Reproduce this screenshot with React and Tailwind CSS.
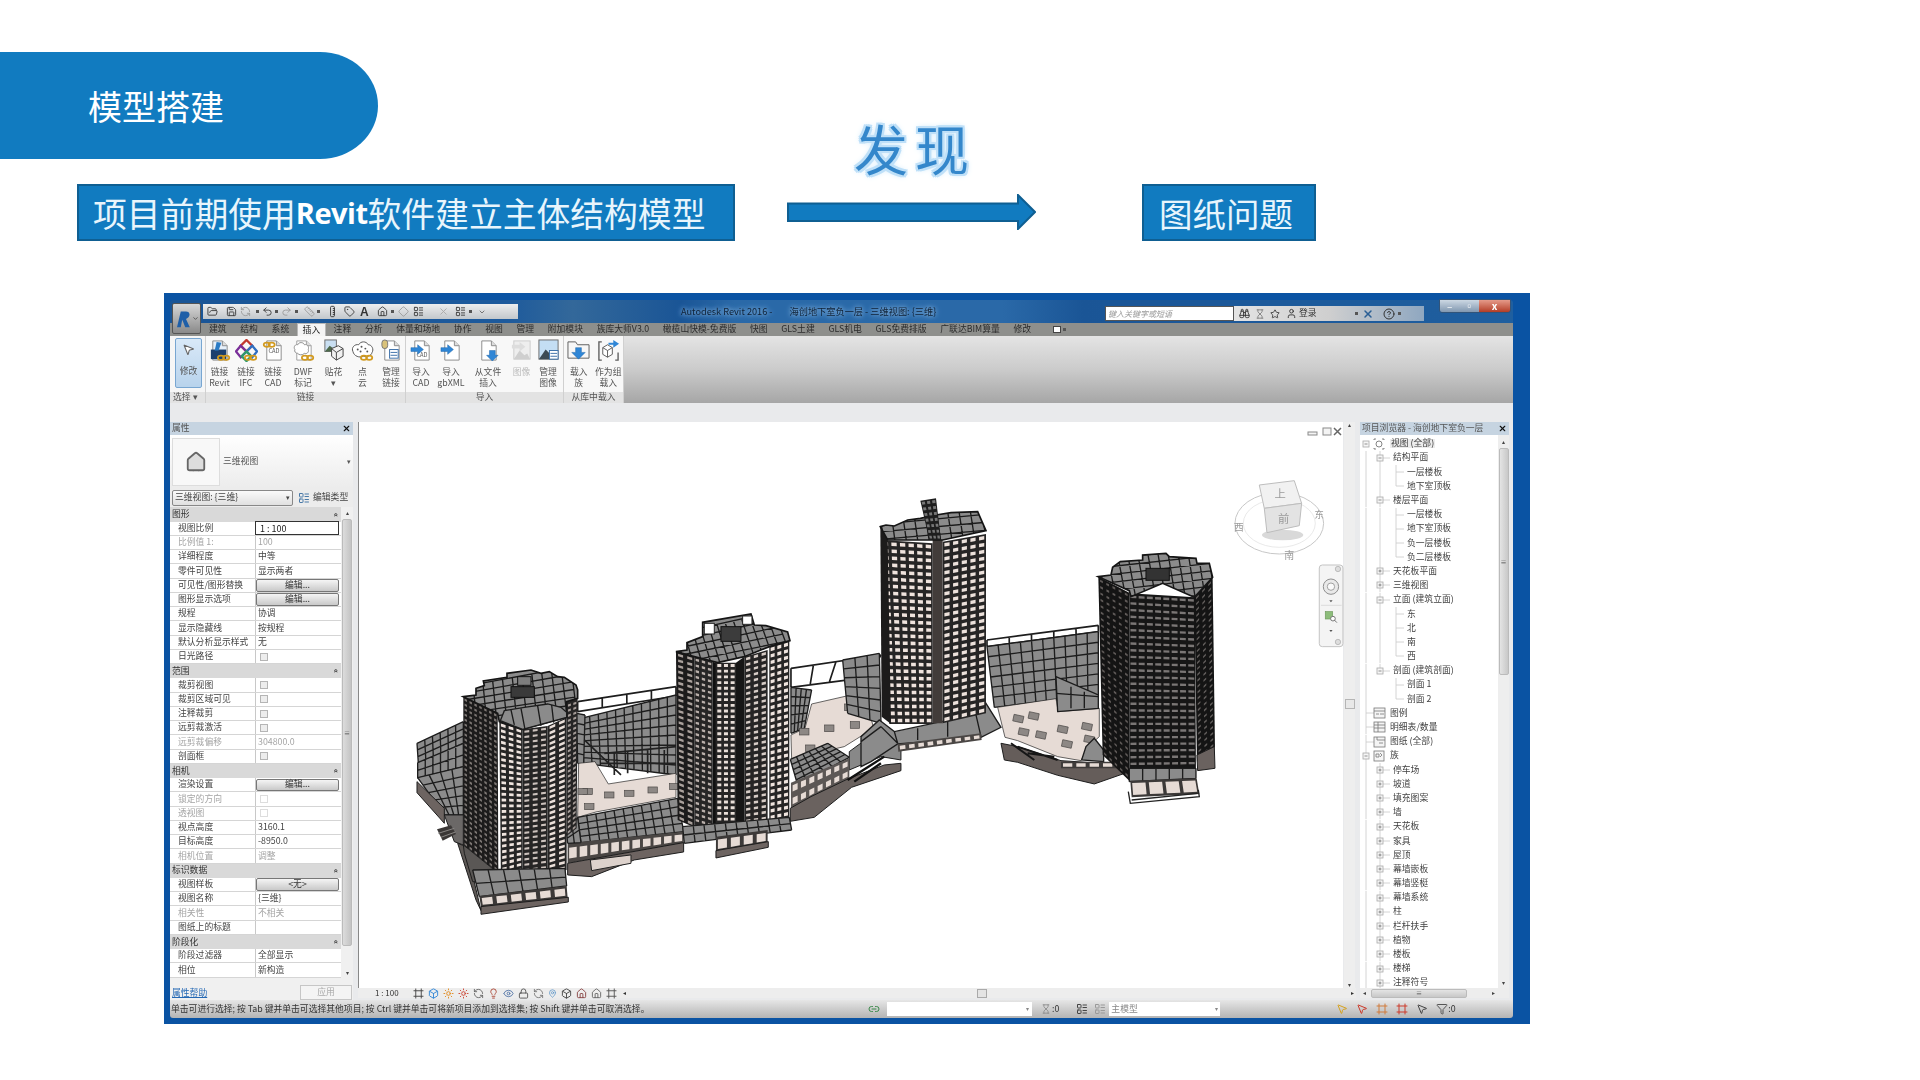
import React, { useId } from 'react';
import {
  Binoculars, Box, ChevronDown, CircleHelp, Diamond, Eye, Filter, FolderOpen, Frame, Home, Hourglass, LayoutList,
  Lightbulb, Link2, Lock, MapPin, MousePointer2, Redo2, RefreshCcw, Ruler, Save, Star, Sun, Tag, Undo2, User, X,
} from 'lucide-react';

/* ---------- building model: points are in 3x zoom coordinates, see the two groups in ModelDrawing ---------- */
const lerp = (a, b, t) => [a[0] + (b[0] - a[0]) * t, a[1] + (b[1] - a[1]) * t];
const at = (q, u, v) => lerp(lerp(q[0], q[1], u), lerp(q[3], q[2], u), v);
const pts = (list) => list.map((p) => `${p[0].toFixed(1)},${p[1].toFixed(1)}`).join(' ');

const cellPath = (q, cols, rows, fw, fh) => {
  let d = '';
  for (let r = 0; r < rows; r++) {
    for (let c = 0; c < cols; c++) {
      const u0 = (c + (1 - fw) / 2) / cols;
      const u1 = (c + (1 + fw) / 2) / cols;
      const v0 = (r + (1 - fh) / 2) / rows;
      const v1 = (r + (1 + fh) / 2) / rows;
      const a = at(q, u0, v0);
      const b = at(q, u1, v0);
      const e = at(q, u1, v1);
      const f = at(q, u0, v1);
      d += `M${a[0].toFixed(1)} ${a[1].toFixed(1)}L${b[0].toFixed(1)} ${b[1].toFixed(1)}L${e[0].toFixed(1)} ${e[1].toFixed(1)}L${f[0].toFixed(1)} ${f[1].toFixed(1)}Z`;
    }
  }
  return d;
};

const gridPath = (q, cols, rows) => {
  let d = '';
  for (let c = 0; c <= cols; c++) {
    const a = at(q, c / cols, 0);
    const b = at(q, c / cols, 1);
    d += `M${a[0].toFixed(1)} ${a[1].toFixed(1)}L${b[0].toFixed(1)} ${b[1].toFixed(1)}`;
  }
  for (let r = 0; r <= rows; r++) {
    const a = at(q, 0, r / rows);
    const b = at(q, 1, r / rows);
    d += `M${a[0].toFixed(1)} ${a[1].toFixed(1)}L${b[0].toFixed(1)} ${b[1].toFixed(1)}`;
  }
  return d;
};

const Face = ({ q, cols, rows, color = '#e9ded8', fw = 0.55, fh = 0.5, base = '#262525' }) => (
  <g>
    <polygon points={pts(q)} fill={base} />
    <path d={cellPath(q, cols, rows, fw, fh)} fill={color} />
  </g>
);

const Slab = ({ q, cols, rows, fill = '#8b8b8b', w = 4 }) => (
  <g>
    <polygon points={pts(q)} fill={fill} />
    <path d={gridPath(q, cols, rows)} stroke="#1d1d1d" strokeWidth={w} fill="none" />
  </g>
);

const Shape = ({ p, fill, stroke = '#1d1d1d', w = 3 }) => <polygon points={pts(p)} fill={fill} stroke={stroke} strokeWidth={w} />;

// stepped roof outline with a structural grid clipped to it
const Roof = ({ p, q, cols, rows }) => {
  const id = useId();
  return (
    <g>
      <clipPath id={id}>
        <polygon points={pts(p)} />
      </clipPath>
      <polygon points={pts(p)} fill="#8b8b8b" />
      <path d={gridPath(q, cols, rows)} stroke="#1b1b1b" strokeWidth="4" fill="none" clipPath={`url(#${id})`} />
      <polygon points={pts(p)} fill="none" stroke="#151515" strokeWidth="5" />
    </g>
  );
};

const PINK = '#e6dbd5';
const BROWN = '#6d6461';

const PIERS_LEFT = [
  [560, 935], [625, 945], [685, 940], [755, 930], [545, 935], [565, 980], [820, 920],
];
const PIERS_RIGHT = [
  [1345, 682], [1285, 745], [1362, 735], [1228, 805], [1210, 755],
];
const PIERS_CD = [
  [472, 776], [518, 768], [605, 808], [678, 800], [488, 816], [540, 825], [618, 852], [685, 838],
];

const ModelLeft = () => (
  <g transform="translate(400 480) scale(0.3333)">
    {/* rails behind the podium */}
    <Slab q={[[530, 665], [825, 620], [825, 648], [530, 695]]} cols={4} rows={1} fill="#ffffff" w={5} />
    <Slab q={[[1170, 565], [1440, 525], [1400, 592], [1170, 622]]} cols={4} rows={1} fill="#ffffff" w={5} />

    {/* left wing */}
    <Slab q={[[48, 790], [187, 725], [187, 790], [52, 850]]} cols={6} rows={3} />
    <Slab q={[[50, 848], [187, 790], [187, 860], [50, 895]]} cols={6} rows={2} />
    <Slab q={[[50, 893], [187, 860], [187, 1005], [130, 1005]]} cols={4} rows={5} />
    <Shape p={[[48, 905], [130, 985], [130, 1030], [48, 938]]} fill={BROWN} />
    <Shape p={[[130, 1005], [187, 1005], [187, 1095], [160, 1085]]} fill="#6b6867" />
    <Shape p={[[170, 1090], [195, 1100], [240, 1292], [225, 1260]]} fill="#5e5956" />
    <polygon points="108,1048 150,1036 165,1062 125,1082" fill="#3a3736" />
    <path d="M112 1060L160 1045M120 1072L164 1056" stroke="#8a8785" strokeWidth="3" />

    {/* roof and courtyard between A and B */}
    <Slab q={[[540, 715], [825, 645], [825, 885], [548, 850]]} cols={11} rows={8} />
    <Slab q={[[527, 700], [552, 705], [548, 855], [530, 850]]} cols={1} rows={5} />
    <Shape p={[[533, 850], [582, 845], [622, 912], [825, 880], [825, 952], [585, 996], [530, 1012]]} fill={PINK} w={2} />
    {PIERS_LEFT.map(([x, y]) => (
      <rect key={`${x}-${y}`} x={x - 14} y={y - 9} width="28" height="18" fill="#8d8885" stroke="#4a4745" strokeWidth="2" />
    ))}
    <path d="M550 780L660 885M640 885V815M680 880V815M740 880V810M790 880V810M610 820L825 800M600 850H825" stroke="#222" strokeWidth="5" />
    <Slab q={[[530, 1012], [830, 955], [848, 1055], [540, 1088]]} cols={11} rows={4} />
    <Face q={[[500, 1090], [848, 1055], [848, 1090], [500, 1150]]} cols={11} rows={1} color={PINK} fw={0.72} fh={0.55} base="#4a4644" />
    <Shape p={[[500, 1150], [848, 1088], [848, 1116], [700, 1140], [572, 1190], [500, 1185]]} fill={BROWN} />
    <path d="M568 1140L690 1125V1150L572 1172Z" fill="#ddd2cc" stroke="#222" strokeWidth="3" />
    <Slab q={[[497, 1060], [530, 1012], [540, 1088], [500, 1090]]} cols={2} rows={2} />

    {/* courtyard and roofs between B and C */}
    <Slab q={[[1170, 622], [1232, 630], [1210, 745], [1170, 760]]} cols={4} rows={5} />
    <Shape p={[[1170, 765], [1212, 745], [1232, 672], [1390, 636], [1418, 745], [1330, 800], [1172, 836]]} fill={PINK} w={2} />
    {PIERS_RIGHT.map(([x, y]) => (
      <rect key={`${x}-${y}`} x={x - 14} y={y - 10} width="28" height="20" fill="#8d8885" stroke="#4a4745" strokeWidth="2" />
    ))}
    <Slab q={[[1168, 838], [1280, 790], [1345, 832], [1190, 915]]} cols={6} rows={5} />
    <Shape p={[[1345, 815], [1420, 760], [1470, 762], [1500, 790], [1500, 840], [1440, 830], [1345, 870]]} fill="#888888" w={3} />
    <Face q={[[1170, 908], [1345, 835], [1345, 895], [1170, 985]]} cols={7} rows={2} color={PINK} fw={0.6} fh={0.5} base="#5c5755" />
    <Shape p={[[1168, 985], [1230, 950], [1345, 895], [1450, 855], [1500, 850], [1500, 872], [1352, 922], [1240, 1012], [1168, 1024]]} fill="#6a625f" />
    <path d="M1340 900L1450 830M1360 905L1440 850" stroke="#111" strokeWidth="7" />

    {/* tower A */}
    <Face q={[[187, 650], [290, 700], [292, 1180], [187, 1095]]} cols={7} rows={30} color="#7c7673" fw={0.5} fh={0.45} base="#1c1b1b" />
    <Face q={[[497, 640], [530, 630], [527, 1045], [497, 1068]]} cols={2} rows={28} color="#a59c98" fw={0.55} fh={0.45} />
    <Face q={[[295, 725], [365, 748], [365, 1192], [300, 1212]]} cols={3} rows={28} color="#efe4de" fw={0.6} fh={0.5} />
    <Face q={[[365, 748], [440, 738], [440, 1185], [365, 1195]]} cols={3} rows={28} color="#cbc1bc" fw={0.58} fh={0.4} />
    <Face q={[[440, 738], [497, 712], [497, 1170], [440, 1185]]} cols={2} rows={28} color="#eadfd9" fw={0.6} fh={0.5} />
    <Roof
      p={[[187, 650], [225, 645], [225, 625], [250, 617], [247, 603], [318, 592], [318, 580], [390, 570], [420, 580], [445, 575], [470, 590], [490, 592], [525, 615], [530, 630], [530, 655], [497, 665], [497, 712], [365, 748], [295, 725], [290, 700]]}
      q={[[187, 620], [510, 560], [530, 720], [200, 760]]}
      cols={11}
      rows={7}
    />
    <Shape p={[[298, 722], [310, 692], [370, 682], [440, 672], [480, 682], [497, 697], [497, 712], [365, 748]]} fill="#8b8b8b" w={4} />
    <path d="M360 685L372 748M410 678L420 738M452 675L458 728M330 690L340 735" stroke="#1b1b1b" strokeWidth="4" />
    <rect x="330" y="620" width="70" height="32" fill="#3a3a3a" stroke="#111" strokeWidth="3" />
    <rect x="350" y="590" width="40" height="26" fill="#7d7d7d" stroke="#111" strokeWidth="3" />
    <Shape p={[[187, 1095], [292, 1180], [298, 1212], [215, 1205], [190, 1120]]} fill="#5a5755" />
    <Slab q={[[215, 1170], [492, 1165], [497, 1218], [235, 1250]]} cols={6} rows={2} />
    <Face q={[[235, 1248], [497, 1218], [500, 1254], [240, 1282]]} cols={6} rows={1} color={PINK} fw={0.72} fh={0.6} base="#3c3938" />
    <Shape p={[[240, 1280], [502, 1252], [502, 1266], [240, 1303]]} fill={BROWN} />

    {/* tower B */}
    <Face q={[[825, 515], [880, 530], [880, 1042], [830, 1020]]} cols={2} rows={30} color="#aaa19c" fw={0.55} fh={0.45} base="#1c1b1b" />
    <Face q={[[880, 530], [935, 545], [935, 1062], [880, 1045]]} cols={3} rows={30} color="#b9afaa" fw={0.55} fh={0.42} />
    <Face q={[[945, 548], [1005, 548], [1005, 1060], [945, 1060]]} cols={3} rows={30} color="#e8ded8" fw={0.6} fh={0.5} />
    <Face q={[[1030, 530], [1100, 510], [1100, 1040], [1030, 1050]]} cols={3} rows={30} color="#d6ccc6" fw={0.55} fh={0.45} />
    <Face q={[[1105, 500], [1165, 482], [1165, 1030], [1105, 1042]]} cols={3} rows={28} color="#efe4de" fw={0.6} fh={0.52} />
    <polygon points={pts([[1005, 548], [1030, 530], [1030, 1050], [1005, 1060]])} fill="#161616" />
    <polygon points={pts([[935, 545], [945, 548], [945, 1060], [935, 1062]])} fill="#111111" />
    <Roof
      p={[[825, 515], [858, 510], [858, 488], [905, 470], [905, 427], [1050, 402], [1060, 435], [1095, 437], [1160, 456], [1167, 482], [1105, 500], [1030, 530], [950, 548], [880, 530]]}
      q={[[825, 460], [1120, 395], [1170, 530], [860, 590]]}
      cols={12}
      rows={6}
    />
    <rect x="910" y="430" width="30" height="32" fill="#ffffff" stroke="#222" strokeWidth="3" />
    <rect x="1025" y="408" width="28" height="25" fill="#ffffff" stroke="#222" strokeWidth="3" />
    <rect x="960" y="440" width="60" height="44" fill="#3c3c3c" stroke="#111" strokeWidth="3" />
    <Slab q={[[845, 1040], [1165, 1012], [1172, 1050], [850, 1090]]} cols={10} rows={2} />
    <Face q={[[945, 1070], [1100, 1050], [1100, 1090], [945, 1118]]} cols={4} rows={1} color={PINK} fw={0.7} fh={0.6} base="#3c3938" />
    <Shape p={[[945, 1112], [1102, 1085], [1102, 1102], [945, 1134]]} fill={BROWN} />
  </g>
);

const ModelRight = () => (
  <g transform="translate(860 460) scale(0.3333)">
    <Slab q={[[-55, 600], [55, 580], [60, 790], [-40, 760]]} cols={3} rows={6} />
    <Shape p={[[55, 780], [100, 815], [350, 762], [375, 730], [420, 802], [360, 832], [110, 852], [30, 905], [0, 920], [0, 830]]} fill="#8b8b8b" w={4} />
    <path d="M60 800L110 850M100 815L110 850M170 805V840M260 785V830M345 765L360 830M0 845L60 800" stroke="#1b1b1b" strokeWidth="4" fill="none" />
    <Face q={[[110, 852], [360, 820], [362, 840], [112, 875]]} cols={9} rows={1} color={PINK} fw={0.6} fh={0.5} base="#4a4644" />

    {/* tower C */}
    <Face q={[[60, 240], [215, 250], [215, 792], [85, 792]]} cols={6} rows={26} color="#efe3dd" fw={0.62} fh={0.5} />
    <Face q={[[245, 245], [375, 222], [375, 760], [245, 790]]} cols={5} rows={26} color="#ece1db" fw={0.6} fh={0.5} />
    <polygon points={pts([[215, 235], [245, 235], [245, 790], [215, 790]])} fill="#423c3a" />
    <polygon points={pts([[58, 200], [80, 240], [90, 792], [62, 770]])} fill="#1c1b1b" />
    <Roof
      p={[[58, 200], [75, 195], [100, 198], [140, 180], [178, 175], [225, 165], [270, 158], [350, 155], [375, 212], [245, 240], [80, 240]]}
      q={[[58, 170], [360, 140], [375, 235], [70, 260]]}
      cols={9}
      rows={4}
    />
    <Face q={[[178, 122], [225, 115], [240, 240], [205, 240]]} cols={3} rows={7} color="#777777" fw={0.6} fh={0.5} base="#1e1e1e" />

    {/* roof and courtyard between C and D */}
    <Slab q={[[378, 540], [712, 496], [712, 515], [378, 560]]} cols={5} rows={1} fill="#ffffff" w={5} />
    <Slab q={[[378, 560], [712, 515], [712, 705], [400, 742]]} cols={10} rows={6} />
    <Shape p={[[410, 742], [585, 716], [592, 755], [715, 745], [715, 830], [680, 862], [660, 902], [590, 890], [470, 842], [432, 832]]} fill={PINK} w={2} />
    {PIERS_CD.map(([x, y]) => (
      <rect key={`${x}-${y}`} x={x - 15} y={y - 10} width="30" height="20" fill="#8d8885" stroke="#4a4745" strokeWidth="2" transform={`rotate(12 ${x} ${y})`} />
    ))}
    <Shape p={[[585, 650], [712, 705], [712, 745], [590, 755]]} fill="#8b8b8b" w={4} />
    <path d="M585 700L712 710M630 680V745M670 695V745" stroke="#1b1b1b" strokeWidth="4" />
    <Shape p={[[662, 900], [675, 860], [700, 835], [728, 870], [728, 905]]} fill="#8b8b8b" w={4} />
    <Shape p={[[420, 850], [470, 860], [600, 902], [660, 906], [730, 912], [800, 912], [800, 937], [700, 972], [590, 946], [470, 907], [430, 900]]} fill="#655d5a" />
    <Face q={[[600, 905], [800, 905], [800, 925], [600, 925]]} cols={5} rows={1} color={PINK} fw={0.7} fh={0.55} base="#3e3b3a" />
    <path d="M470 860L590 900M500 880L580 890M450 850L520 900" stroke="#161616" strokeWidth="6" />

    {/* tower D */}
    <Face q={[[712, 350], [805, 398], [805, 962], [725, 885]]} cols={5} rows={28} color="#5f5a58" fw={0.45} fh={0.33} base="#141414" />
    <Face q={[[805, 400], [1002, 412], [1005, 958], [805, 962]]} cols={8} rows={28} color="#7a7675" fw={0.72} fh={0.36} base="#161616" />
    <Face q={[[1000, 412], [1055, 352], [1062, 860], [1008, 905]]} cols={3} rows={28} color="#625e5c" fw={0.45} fh={0.33} base="#141414" />
    <Roof
      p={[[712, 350], [750, 345], [755, 322], [778, 305], [845, 300], [845, 285], [915, 280], [925, 290], [1005, 295], [1008, 310], [1045, 310], [1055, 352], [1000, 412], [905, 370], [810, 410], [805, 392]]}
      q={[[712, 300], [1040, 265], [1060, 400], [740, 440]]}
      cols={11}
      rows={6}
    />
    <rect x="855" y="325" width="70" height="36" fill="#333333" stroke="#111" strokeWidth="3" />
    <Shape p={[[1008, 885], [1060, 860], [1062, 925], [1010, 932]]} fill="#6a625f" />
    <Slab q={[[805, 925], [1005, 925], [1005, 955], [805, 965]]} cols={5} rows={1} />
    <Face q={[[808, 962], [1007, 955], [1015, 1002], [812, 1012]]} cols={4} rows={1} color={PINK} fw={0.8} fh={0.72} base="#3c3938" />
    <path d="M802 995L808 1030L1015 1010L1012 990M812 1020L1010 1000" stroke="#222" strokeWidth="4" fill="none" />

    {/* view cube */}
    <ellipse cx="1255" cy="190" rx="133" ry="92" fill="none" stroke="#c7c7c7" strokeWidth="3" />
    <ellipse cx="1255" cy="190" rx="108" ry="72" fill="none" stroke="#dedede" strokeWidth="2" />
    <ellipse cx="1265" cy="225" rx="62" ry="16" fill="#d9d9d9" />
    <polygon points="1195,75 1300,62 1322,130 1210,145" fill="#f1f1f1" stroke="#bdbdbd" strokeWidth="3" />
    <polygon points="1210,145 1322,130 1315,197 1218,218" fill="#e3e3e3" stroke="#bdbdbd" strokeWidth="3" />
    <g fontSize="34" fill="#9a9a9a" textAnchor="middle">
      <text x="1258" y="115">上</text>
      <text x="1268" y="190">前</text>
      <text x="1375" y="175" fontSize="28">东</text>
      <text x="1285" y="298" fontSize="30">南</text>
      <text x="1133" y="212" fontSize="30">西</text>
    </g>
    {/* navigation bar */}
    <rect x="1375" y="315" width="71" height="245" rx="9" fill="#f4f4f4" stroke="#c4c4c4" strokeWidth="3" />
    <circle cx="1431" cy="327" r="8" fill="#dddddd" stroke="#a8a8a8" strokeWidth="2" />
    <circle cx="1431" cy="546" r="8" fill="#dddddd" stroke="#a8a8a8" strokeWidth="2" />
    <circle cx="1410" cy="380" r="23" fill="#e9e9e9" stroke="#8f8f8f" strokeWidth="3" />
    <circle cx="1410" cy="380" r="11" fill="#fafafa" stroke="#a0a0a0" strokeWidth="3" />
    <path d="M1380 436H1442" stroke="#cfcfcf" strokeWidth="2" />
    <rect x="1393" y="455" width="22" height="22" fill="#8dbd7b" stroke="#6d9a5c" strokeWidth="2" />
    <circle cx="1416" cy="476" r="7" fill="#ffffff" stroke="#777777" strokeWidth="3" />
    <path d="M1420 480L1428 488" stroke="#777777" strokeWidth="3" />
    <path d="M1405 421H1415L1410 427ZM1405 510H1415L1410 516Z" fill="#555555" />
  </g>
);

const ModelDrawing = () => (
  <svg viewBox="358 422 985 566" className="block w-[985px] h-[566px] [font-family:'Noto_Sans_CJK_SC',sans-serif]">
    <ModelLeft />
    <ModelRight />
    <g stroke="#8a8a8a" fill="#f4f4f4">
      <rect x="1307" y="432" width="9" height="3" />
      <rect x="1322" y="428" width="8" height="7" />
      <path d="M1333 428L1340 435M1340 428L1333 435" fill="none" strokeWidth="1.5" stroke="#666666" />
    </g>
  </svg>
);

/* ---------- ribbon icons ---------- */
const Page = ({ fill = '#ffffff', stroke = '#8c8c8c' }) => (
  <>
    <path d="M5 2h10l5 5v15H5z" fill={fill} stroke={stroke} />
    <path d="M15 2v5h5" fill="#dddddd" stroke={stroke} />
  </>
);
const Chain = () => (
  <g fill="none" stroke="#d29a1f" strokeWidth="1.8">
    <ellipse cx="13.5" cy="19.5" rx="3.2" ry="2.2" />
    <ellipse cx="19" cy="19.5" rx="3.2" ry="2.2" />
  </g>
);
const ArrowRight = () => <path d="M1 9h7V6l6 5-6 5v-3H1z" fill="#2f86d6" stroke="#1c62a8" strokeWidth="0.5" />;
const ArrowDown = () => <path d="M13 12h6v5h3l-6 6-6-6h3z" fill="#2f86d6" stroke="#1c62a8" strokeWidth="0.5" />;

const RibbonIcon = ({ name }) => {
  const art = {
    revit: (
      <>
        <Page fill="#e7f0fa" />
        <rect x="3" y="11" width="16" height="10" fill="#1c3f6e" />
        <path d="M9 3l5 1-3 8H7z" fill="#2a7ac4" />
        <Chain />
      </>
    ),
    ifc: (
      <>
        <path d="M12 1l6 6-6 6-6-6z" fill="none" stroke="#c2392f" strokeWidth="2.4" />
        <path d="M6 7l6 6-6 6-5-6z" fill="none" stroke="#7a2f9a" strokeWidth="2.4" />
        <path d="M18 7l5 6-5 6-6-6z" fill="none" stroke="#2f6fc2" strokeWidth="2.4" />
        <path d="M12 13l5 5-5 5-5-5z" fill="none" stroke="#2f9a6a" strokeWidth="2.4" />
        <Chain />
      </>
    ),
    cad: (
      <>
        <Page />
        <text x="12.5" y="15" fontSize="6" textAnchor="middle" fill="#555555">CAD</text>
        <g fill="none" stroke="#d29a1f" strokeWidth="1.8">
          <ellipse cx="5" cy="6" rx="3.2" ry="2.2" />
          <ellipse cx="10" cy="6" rx="3.2" ry="2.2" />
        </g>
      </>
    ),
    dwf: (
      <>
        <Page stroke="#a0a0a0" />
        <path d="M3 11c-2-3 1-6 3-5 1-3 6-3 7 0 3-1 5 2 4 5 1 3-2 5-4 4-2 2-6 2-7 0-2 0-4-2-3-4z" fill="#ffffff" stroke="#8c8c8c" />
        <Chain />
      </>
    ),
    decal: (
      <>
        <rect x="3" y="1" width="12" height="12" fill="#c9dff2" stroke="#6c6c6c" />
        <path d="M3 13l5-6 4 3 3-2v5H3z" fill="#4d6a4b" />
        <path d="M10 10l7-3 5 3v8l-7 4-5-4z" fill="#f1f1f1" stroke="#444444" />
        <path d="M10 10l5 4 7-4M15 14v8" fill="none" stroke="#444444" />
      </>
    ),
    cloud: (
      <>
        <path d="M2 13C0 9 4 5 8 6c2-4 8-4 10 0 4 0 6 5 4 8-1 4-6 5-9 4-4 2-10 0-11-5z" fill="#ffffff" stroke="#555555" />
        <g fill="#555555">
          <circle cx="7" cy="11" r="1" />
          <circle cx="11" cy="8" r="1" />
          <circle cx="15" cy="10" r="1" />
          <circle cx="10" cy="13" r="1" />
          <circle cx="17" cy="13" r="1" />
        </g>
        <Chain />
      </>
    ),
    manage: (
      <>
        <Page />
        <rect x="2" y="1" width="6" height="9" rx="3" fill="#d9c27a" stroke="#777777" />
        <rect x="10" y="11" width="9" height="9" fill="#ffffff" stroke="#3b6fa8" />
        <path d="M11 14h7M11 17h7" stroke="#3b6fa8" />
      </>
    ),
    importCad: (
      <>
        <Page />
        <text x="12.5" y="19" fontSize="6" textAnchor="middle" fill="#555555">CAD</text>
        <ArrowRight />
      </>
    ),
    importXml: (
      <>
        <Page />
        <ArrowRight />
      </>
    ),
    insert: (
      <>
        <Page />
        <ArrowDown />
      </>
    ),
    imageOff: (
      <>
        <rect x="4" y="2" width="17" height="19" fill="#eeeeee" stroke="#cccccc" />
        <path d="M4 21l6-9 5 5 3-2 3 6z" fill="#cfcfcf" />
        <path d="M2 6h8v-3l6 5-6 5v-3H2z" fill="#dddddd" />
      </>
    ),
    image: (
      <>
        <rect x="2" y="1" width="20" height="20" fill="#c4def4" stroke="#6c6c6c" />
        <path d="M2 21l7-10 5 5 3-3 5 8z" fill="#3d4b55" />
        <rect x="13" y="12" width="9" height="9" fill="#ffffff" stroke="#3b6fa8" />
        <path d="M14 15h7M14 18h7" stroke="#3b6fa8" />
      </>
    ),
    family: (
      <>
        <path d="M1 3h8l2 3h12v14H1z" fill="#f7f7f7" stroke="#5c5c5c" />
        <path d="M9 9h6v5h4l-7 7-7-7h4z" fill="#2f86d6" stroke="#1c62a8" strokeWidth="0.5" />
      </>
    ),
    group: (
      <>
        <path d="M5 3H2v19h3M19 22h3v-8" fill="none" stroke="#5c5c5c" strokeWidth="1.4" />
        <path d="M6 9l5-3 5 3v7l-5 3-5-3z" fill="#ffffff" stroke="#5c5c5c" />
        <path d="M6 9l5 3 5-3M11 12v7" fill="none" stroke="#5c5c5c" />
        <path d="M12 4h5V1l6 4-6 4V6h-5z" fill="#2f86d6" />
      </>
    ),
  };
  return (
    <svg viewBox="0 0 24 24" className="w-[23px] h-[23px]">
      {art[name]}
    </svg>
  );
};

const RIBBON = [
  {
    label: '链接',
    width: 'w-[200px]',
    buttons: [
      { w: 'w-[27px]', icon: 'revit', lines: ['链接', 'Revit'] },
      { w: 'w-[26px]', icon: 'ifc', lines: ['链接', 'IFC'] },
      { w: 'w-[28px]', icon: 'cad', lines: ['链接', 'CAD'] },
      { w: 'w-[32px]', icon: 'dwf', lines: ['DWF', '标记'] },
      { w: 'w-[29px]', icon: 'decal', lines: ['贴花', '▾'] },
      { w: 'w-[29px]', icon: 'cloud', lines: ['点', '云'] },
      { w: 'w-[28px]', icon: 'manage', lines: ['管理', '链接'] },
    ],
  },
  {
    label: '导入',
    width: 'w-[158px]',
    buttons: [
      { w: 'w-[30px]', icon: 'importCad', lines: ['导入', 'CAD'] },
      { w: 'w-[30px]', icon: 'importXml', lines: ['导入', 'gbXML'] },
      { w: 'w-[44px]', icon: 'insert', lines: ['从文件', '插入'] },
      { w: 'w-[23px]', icon: 'imageOff', lines: ['图像', ''], dim: true },
      { w: 'w-[30px]', icon: 'image', lines: ['管理', '图像'] },
    ],
  },
  {
    label: '从库中载入',
    width: 'w-[60px]',
    buttons: [
      { w: 'w-[30px]', icon: 'family', lines: ['载入', '族'] },
      { w: 'w-[30px]', icon: 'group', lines: ['作为组', '载入'] },
    ],
  },
];

const TABS_LEFT = ['建筑', '结构', '系统'];
const TABS_RIGHT = ['注释', '分析', '体量和场地', '协作', '视图', '管理', '附加模块', '族库大师V3.0', '橄榄山快模-免费版', '快图', 'GLS土建', 'GLS机电', 'GLS免费排版', '广联达BIM算量', '修改'];

/* ---------- properties ---------- */
const PROPS = [
  { head: '图形' },
  { l: '视图比例', kind: 'active', v: '1 : 100' },
  { l: '比例值 1:', v: '100', dim: true },
  { l: '详细程度', v: '中等' },
  { l: '零件可见性', v: '显示两者' },
  { l: '可见性/图形替换', kind: 'btn', v: '编辑...' },
  { l: '图形显示选项', kind: 'btn', v: '编辑...' },
  { l: '规程', v: '协调' },
  { l: '显示隐藏线', v: '按规程' },
  { l: '默认分析显示样式', v: '无' },
  { l: '日光路径', kind: 'check' },
  { head: '范围' },
  { l: '裁剪视图', kind: 'check' },
  { l: '裁剪区域可见', kind: 'check' },
  { l: '注释裁剪', kind: 'check' },
  { l: '远剪裁激活', kind: 'check' },
  { l: '远剪裁偏移', v: '304800.0', dim: true },
  { l: '剖面框', kind: 'check' },
  { head: '相机' },
  { l: '渲染设置', kind: 'btn', v: '编辑...' },
  { l: '锁定的方向', kind: 'check', dim: true },
  { l: '透视图', kind: 'check', dim: true },
  { l: '视点高度', v: '3160.1' },
  { l: '目标高度', v: '-8950.0' },
  { l: '相机位置', v: '调整', dim: true },
  { head: '标识数据' },
  { l: '视图样板', kind: 'btn', v: '<无>' },
  { l: '视图名称', v: '{三维}' },
  { l: '相关性', v: '不相关', dim: true },
  { l: '图纸上的标题', v: '' },
  { head: '阶段化' },
  { l: '阶段过滤器', v: '全部显示' },
  { l: '相位', v: '新构造' },
];

const PropRow = ({ row }) => {
  if (row.head) {
    return (
      <div className="h-[14.25px] bg-[#d9d9d9] flex items-center justify-between pl-[2px] pr-[4px] text-[#333]">
        <span>{row.head}</span>
        <span className="text-[8px] leading-none -rotate-90 font-bold">»</span>
      </div>
    );
  }
  return (
    <div className="h-[14.25px] bg-white border-b border-[#d5d5d5] flex">
      <div className={`w-[86px] pl-[8px] border-r border-[#c8c8c8] flex items-center whitespace-nowrap ${row.dim ? 'text-[#a5a5a5]' : 'text-[#444]'}`}>{row.l}</div>
      <div className={`flex-1 flex items-center ${row.dim ? 'text-[#a5a5a5]' : 'text-[#444]'}`}>
        {row.kind === 'active' && (
          <div className="w-[84px] h-[14px] -ml-px border border-[#333] pl-[4px] flex items-center text-[9px] text-[#222]">{row.v}</div>
        )}
        {row.kind === 'btn' && (
          <div className="w-[83px] h-[12.5px] border border-[#777] rounded-[2px] bg-gradient-to-b from-[#f5f5f5] to-[#c9c9c9] flex items-center justify-center text-[#333]">{row.v}</div>
        )}
        {row.kind === 'check' && <div className={`ml-[4px] w-[8px] h-[8px] border ${row.dim ? 'border-[#ddd] bg-white' : 'border-[#b5b5b5] bg-[#ededed]'}`} />}
        {!row.kind && <span className="pl-[2px]">{row.v}</span>}
      </div>
    </div>
  );
};

/* ---------- project browser ---------- */
const L0_LINE = 6;
const L1_LINE = 20;
const L2_LINE = 36;
const TREE = [
  { t: '视图 (全部)', lv: 0, exp: '-', icon: 'views' },
  { t: '结构平面', lv: 1, exp: '-' },
  { t: '一层楼板', lv: 2 },
  { t: '地下室顶板', lv: 2, end: true },
  { t: '楼层平面', lv: 1, exp: '-' },
  { t: '一层楼板', lv: 2 },
  { t: '地下室顶板', lv: 2 },
  { t: '负一层楼板', lv: 2 },
  { t: '负二层楼板', lv: 2, end: true },
  { t: '天花板平面', lv: 1, exp: '+' },
  { t: '三维视图', lv: 1, exp: '+' },
  { t: '立面 (建筑立面)', lv: 1, exp: '-' },
  { t: '东', lv: 2 },
  { t: '北', lv: 2 },
  { t: '南', lv: 2 },
  { t: '西', lv: 2, end: true },
  { t: '剖面 (建筑剖面)', lv: 1, exp: '-', last: true },
  { t: '剖面 1', lv: 2, afterLast: true },
  { t: '剖面 2', lv: 2, end: true, afterLast: true },
  { t: '图例', lv: 0, icon: 'legend', afterLast: true },
  { t: '明细表/数量', lv: 0, icon: 'table', afterLast: true },
  { t: '图纸 (全部)', lv: 0, icon: 'sheet', afterLast: true },
  { t: '族', lv: 0, exp: '-', icon: 'family', afterLast: true },
  ...['停车场', '坡道', '填充图案', '墙', '天花板', '家具', '屋顶', '幕墙嵌板', '幕墙竖梃', '幕墙系统', '柱', '栏杆扶手', '植物', '楼板', '楼梯', '注释符号'].map((t) => ({ t, lv: 1, exp: '+', fam: true })),
];

const Expander = ({ x, kind }) => (
  <g>
    <rect x={x - 3} y="4" width="6" height="6" fill="#f6f6f6" stroke="#a9a9a9" strokeWidth="0.8" />
    <path d={kind === '+' ? `M${x - 1.5} 7H${x + 1.5}M${x} 5.5V8.5` : `M${x - 1.5} 7H${x + 1.5}`} stroke="#666666" strokeWidth="0.7" />
  </g>
);

const TreeIcon = ({ kind }) => {
  if (kind === 'views') {
    return (
      <g fill="none" stroke="#666666" strokeWidth="0.8">
        <circle cx="19" cy="7" r="3" />
        <path d="M14 3V2h2M22 2h2v1M24 11v1h-2M16 12h-2v-1" />
      </g>
    );
  }
  if (kind === 'family') {
    return (
      <g fill="#f6f6f6" stroke="#777777" strokeWidth="0.8">
        <rect x="14" y="2" width="10" height="10" />
        <path d="M16 5h3v3h-3zM20 4l2 2-2 2" fill="none" />
      </g>
    );
  }
  return (
    <g fill="#f4f4f4" stroke="#777777" strokeWidth="0.8">
      <rect x="14" y="2" width="11" height="10" />
      <path d={kind === 'legend' ? 'M14 5h11M16 8h3M20 8h4' : kind === 'table' ? 'M14 5h11M14 8h11M18 2v10' : 'M17 2v3h8M19 8h4'} fill="none" />
    </g>
  );
};

const TreeRow = ({ row }) => {
  const textLeft = row.lv === 0 ? 30 : row.lv === 1 ? 33 : 47;
  return (
    <div className="h-[14.2px] flex items-center text-[#3f3f3f] whitespace-nowrap">
      <svg width={textLeft} height="14.2" className="shrink-0">
        <g stroke="#c9c9c9" strokeWidth="0.8" fill="none">
          {(row.lv > 0 || row.icon === 'family' || row.afterLast) && <path d={`M${L0_LINE} 0V14.2`} />}
          {row.lv === 0 && !row.exp && <path d={`M${L0_LINE} 7H14`} />}
          {row.lv === 1 && <path d={`M${L1_LINE} 0V${row.last ? 7 : 14.2}M${L1_LINE} 7H30`} />}
          {row.lv === 2 && !row.afterLast && <path d={`M${L1_LINE} 0V14.2`} />}
          {row.lv === 2 && <path d={`M${L2_LINE} 0V${row.end ? 7 : 14.2}M${L2_LINE} 7H44`} />}
        </g>
        {row.exp && <Expander x={row.lv === 0 ? L0_LINE : L1_LINE} kind={row.exp} />}
        {row.icon && <TreeIcon kind={row.icon} />}
      </svg>
      <span className={row.icon === 'views' ? 'bg-[#ececec] px-px' : ''}>{row.t}</span>
    </div>
  );
};

const Dot = () => <span className="block w-[3px] h-[3px] bg-[#555]" />;
const qaIcon = 'w-[11px] h-[11px] text-[#3c3c3c] shrink-0';

export default function App() {
  return (
    <div className="w-[1920px] h-[1080px] bg-white overflow-hidden [font-family:'Noto_Sans_CJK_SC','Liberation_Sans',sans-serif]">
      {/* slide header */}
      <div className="flex items-end h-[241px]">
        <div className="w-[735px]">
          <div className="w-[378px] h-[107px] bg-[#117bc0] rounded-r-[58px_53.5px] pl-[88px] flex items-center text-white text-[34px] leading-none">模型搭建</div>
          <div className="ml-[77px] mt-[25px] h-[57px] bg-[#117bc0] border-2 border-[#0f5f92] pl-[14px] flex items-center text-[33.8px] leading-none text-[#e8f5fc] whitespace-nowrap">
            项目前期使用<span className="[font-family:'Open_Sans',sans-serif] font-bold text-[29px] tracking-[-0.5px] text-white">Revit</span>软件建立主体结构模型
          </div>
        </div>
        <div className="ml-[52px] w-[249px] mb-[11px] flex flex-col items-center">
          <div className="text-[54px] leading-none tracking-[7px] ml-[7px] mb-[19px] text-[#3487cb] [text-shadow:2px_0_0_#bfe0f8,-2px_0_0_#bfe0f8,0_2px_0_#bfe0f8,0_-2px_0_#bfe0f8,2px_2px_0_#bfe0f8,-2px_-2px_0_#bfe0f8,2px_-2px_0_#bfe0f8,-2px_2px_0_#bfe0f8,0_0_6px_#a9d8f7]">发现</div>
          <svg viewBox="0 0 249 36" className="w-[249px] h-[36px]">
            <path d="M1 9.5H231V1L248 18 231 35V27H1Z" fill="#117bc0" stroke="#0f5f92" strokeWidth="2" />
          </svg>
        </div>
        <div className="ml-[106px] w-[174px] h-[57px] bg-[#117bc0] border-2 border-[#0f5f92] pl-[15px] flex items-center text-[33.5px] leading-none text-[#e8f5fc] whitespace-nowrap">图纸问题</div>
      </div>

      {/* Revit window screenshot */}
      <div className="ml-[164px] mt-[52px] w-[1366px] h-[731px] bg-[#0a53a3] pt-[7px] pl-[6px] pr-[17px] pb-[6px] flex flex-col text-[8.8px] leading-none blur-[0.4px]">
        {/* title bar */}
        <div className="h-[23px] shrink-0 rounded-t-[3px] bg-[linear-gradient(90deg,#1a5596_0%,#1d5a9c_25%,#33689a_30%,#1a5596_38%,#2a69a8_42%,#2a69a8_62%,#1a5596_68%,#1f5f9f_100%)] flex items-center">
          <div className="w-[29px] h-[31px] ml-[2px] self-start mt-[3px] z-10 bg-gradient-to-b from-[#d8d8d8] to-[#8a8a8a] border border-[#555] rounded-[2px] flex items-center justify-center">
            <svg viewBox="0 0 24 24" className="w-[18px] h-[22px]">
              <path d="M4 23L9 2h7c5 0 6 5 3 8l-3 2 5 11h-6l-4-10-2 10z" fill="#1f5fa8" />
            </svg>
            <ChevronDown className="w-[7px] h-[7px] text-[#222]" />
          </div>
          <div className="ml-[2px] w-[315px] h-[15px] bg-gradient-to-b from-[#eeeeee] to-[#c2c7cc] flex items-center pl-[4px]">
            <FolderOpen className={qaIcon} />
            <Save className={`${qaIcon} ml-[8px]`} />
            <RefreshCcw className={`${qaIcon} ml-[3px] text-[#9a9a9a]`} />
            <span className="ml-[5px]"><Dot /></span>
            <Undo2 className={`${qaIcon} ml-[3px]`} />
            <span className="ml-[2px]"><Dot /></span>
            <Redo2 className={`${qaIcon} ml-[3px] text-[#9a9a9a]`} />
            <span className="ml-[3px]"><Dot /></span>
            <Ruler className={`${qaIcon} ml-[6px] text-[#9a9a9a]`} />
            <span className="ml-[2px]"><Dot /></span>
            <Ruler className={`${qaIcon} ml-[7px] rotate-45`} />
            <Tag className={`${qaIcon} ml-[6px]`} />
            <span className="ml-[5px] text-[12px] font-bold text-[#333] [font-family:'Liberation_Sans',sans-serif]">A</span>
            <Home className={`${qaIcon} ml-[8px]`} />
            <span className="ml-[3px]"><Dot /></span>
            <Diamond className={`${qaIcon} ml-[4px] text-[#9a9a9a]`} />
            <LayoutList className={`${qaIcon} ml-[4px]`} />
            <X className={`${qaIcon} ml-[14px] text-[#aaa]`} />
            <LayoutList className={`${qaIcon} ml-[6px]`} />
            <span className="ml-[3px]"><Dot /></span>
            <ChevronDown className="w-[8px] h-[8px] ml-[6px] text-[#444]" />
          </div>
          <div className="ml-[163px] text-[#0f2034] text-[9.2px] whitespace-nowrap [text-shadow:0_0_4px_#8fbce6,0_0_6px_#8fbce6]">
            Autodesk Revit 2016 -
            <span className="ml-[17px]">海创地下室负一层 - 三维视图: {'{三维}'}</span>
          </div>
          <div className="ml-auto flex items-center self-start mt-[6px] mr-[2px]">
            <div className="w-[129px] h-[15px] bg-white border border-[#555] pl-[2px] flex items-center italic text-[#999] text-[8px]">键入关键字或短语</div>
            <div className="w-[190px] h-[15px] bg-gradient-to-r from-[#e4e4e4] via-[#cfcfcf] to-[#8fa7c0] flex items-center pl-[5px] text-[#333]">
              <Binoculars className="w-[11px] h-[11px]" />
              <Hourglass className="w-[10px] h-[10px] ml-[5px] text-[#777]" />
              <Star className="w-[10px] h-[10px] ml-[5px]" />
              <User className="w-[11px] h-[11px] ml-[6px]" />
              <span className="ml-[2px]">登录</span>
              <span className="ml-[38px]"><Dot /></span>
              <X className="w-[12px] h-[12px] ml-[4px] text-[#2a5f95]" strokeWidth={3} />
              <CircleHelp className="w-[12px] h-[12px] ml-[9px]" />
              <span className="ml-[3px]"><Dot /></span>
            </div>
            <div className="w-[15px]" />
            <div className="w-[72px] h-[14px] -mt-[7px] flex self-start border border-[#31547a] rounded-b-[3px] overflow-hidden">
              <div className="flex-1 bg-gradient-to-b from-[#cdd8e3] to-[#8198b0] flex items-center justify-center text-white text-[10px]">–</div>
              <div className="flex-1 bg-gradient-to-b from-[#cdd8e3] to-[#8198b0] flex items-center justify-center text-white text-[10px]">▫</div>
              <div className="w-[31px] bg-gradient-to-b from-[#e59a8a] to-[#b33c25] flex items-center justify-center text-white font-bold text-[10px]">x</div>
            </div>
          </div>
        </div>

        {/* ribbon tabs */}
        <div className="h-[13px] shrink-0 bg-[#8e8f8c] flex items-end pl-[39px] gap-[13.7px] text-[#2b2b2b] whitespace-nowrap">
          {TABS_LEFT.map((t) => (
            <div key={t} className="h-[13px] flex items-center">{t}</div>
          ))}
          <div className="-mx-[6px] w-[29px] h-[13px] bg-[#f4f4f4] border-x border-t border-[#b8b8b8] flex items-center justify-center text-[#222]">插入</div>
          {TABS_RIGHT.map((t) => (
            <div key={t} className="h-[13px] flex items-center">{t}</div>
          ))}
          <div className="ml-[8px] flex items-center gap-[2px] mb-[3px]">
            <div className="w-[8px] h-[7px] bg-white border border-[#444]" />
            <Dot />
          </div>
        </div>

        {/* ribbon */}
        <div className="h-[67px] shrink-0 flex bg-gradient-to-b from-[#e4e4e4] via-[#cbcbcb] to-[#a6a6a6]">
          <div className="w-[36px] bg-[#f6f6f6] border-r border-[#d0d0d0] flex flex-col">
            <div className="h-[56px] pt-[2px] pl-[5px]">
              <div className="w-[27px] h-[50px] bg-gradient-to-b from-[#d9e9f8] to-[#b8d3ec] border border-[#78a6d1] rounded-[2px] flex flex-col items-center pt-[4px] text-[#555]">
                <MousePointer2 className="w-[13px] h-[13px] text-[#666]" fill="#ffffff" />
                <span className="mt-[11px]">修改</span>
              </div>
            </div>
            <div className="h-[11px] bg-[#e3e3e3] flex items-center pl-[3px] text-[#555]">选择 ▾</div>
          </div>
          {RIBBON.map((panel) => (
            <div key={panel.label} className={`${panel.width} bg-[#f8f8f8] border-r border-[#d0d0d0] flex flex-col`}>
              <div className="h-[56px] flex">
                {panel.buttons.map((b) => (
                  <div key={`${panel.label}-${b.lines.join('')}`} className={`${b.w} flex flex-col items-center pt-[3px] ${b.dim ? 'text-[#bbb]' : 'text-[#555]'}`}>
                    <RibbonIcon name={b.icon} />
                    <span className="mt-[4px] h-[11px] leading-[11px] whitespace-nowrap">{b.lines[0]}</span>
                    <span className="h-[11px] leading-[11px] whitespace-nowrap">{b.lines[1]}</span>
                  </div>
                ))}
              </div>
              <div className="h-[11px] bg-[#e3e3e3] flex items-center justify-center text-[#555]">{panel.label}</div>
            </div>
          ))}
        </div>

        {/* panels */}
        <div className="h-[597px] shrink-0 bg-[#e9eaec] pt-[19px] flex">
          {/* properties */}
          <div className="w-[183px] shrink-0 flex flex-col">
            <div className="h-[13px] bg-[#c6d4e1] flex items-center justify-between px-[2px] text-[#555]">
              <span>属性</span>
              <X className="w-[9px] h-[9px] text-[#111]" strokeWidth={3} />
            </div>
            <div className="h-[53px] bg-gradient-to-b from-white to-[#ececec] flex items-center pl-[2px] pr-[2px] text-[#555]">
              <div className="w-[48px] h-[48px] border border-[#dddddd] bg-[#f8f8f8] flex items-center justify-center">
                <Home className="w-[22px] h-[22px] text-[#666]" fill="#dddddd" />
              </div>
              <span className="ml-[3px]">三维视图</span>
              <span className="ml-auto text-[7px]">▾</span>
            </div>
            <div className="h-[19.4px] flex items-center pl-[2px] bg-[#ececec] text-[#444]">
              <div className="w-[121px] h-[16px] border border-[#888] rounded-[2px] bg-gradient-to-b from-[#fafafa] to-[#e0e0e0] flex items-center justify-between px-[2px]">
                <span>三维视图: {'{三维}'}</span>
                <span className="text-[7px]">▾</span>
              </div>
              <LayoutList className="w-[12px] h-[12px] ml-[5px] text-[#4a7aa8]" />
              <span className="ml-[3px]">编辑类型</span>
            </div>
            <div className="flex">
              <div className="w-[171px] shrink-0">
                {PROPS.map((row) => (
                  <PropRow key={row.head || row.l} row={row} />
                ))}
              </div>
              <div className="w-[12px] flex flex-col items-center bg-[#f0f0f0] text-[6px] text-[#444]">
                <span className="h-[12px] flex items-center">▴</span>
                <div className="w-[10px] h-[427px] bg-gradient-to-r from-[#dcdcdc] to-[#c4c4c4] border border-[#bbb] rounded-[2px] flex items-center justify-center">≡</div>
                <span className="mt-auto h-[10px] flex items-center">▾</span>
              </div>
            </div>
            <div className="flex-1 bg-[#f0f0f0] flex items-start justify-between pt-[7px] pl-[2px] pr-[1px]">
              <span className="mt-[4px] text-[#2468b4] underline">属性帮助</span>
              <div className="w-[52px] h-[15px] border border-[#c6c6c6] bg-[#f4f4f4] flex items-center justify-center text-[#aaa]">应用</div>
            </div>
          </div>

          {/* canvas */}
          <div className="ml-[5px] w-[1002px] shrink-0 flex flex-col">
            <div className="flex">
              <div className="w-[985px] h-[566px] bg-white border-l border-[#888]">
                <ModelDrawing />
              </div>
              <div className="w-[11px] ml-px h-[566px] bg-[#eeeeee] flex flex-col items-center justify-between text-[6px] text-[#444]">
                <span>▴</span>
                <div className="w-[10px] h-[10px] -mt-[2px] border border-[#b5b5b5] bg-[#e8e8e8]" />
                <span>▾</span>
              </div>
            </div>
            <div className="h-[10px] w-[998px] bg-[#ededed] flex items-center pl-[17px] text-[#333] text-[8px]">
              <span>1 : 100</span>
              <div className="ml-[14px] flex items-center gap-[4px]">
                <Frame className="w-[11px] h-[11px] text-[#444]" />
                <Box className="w-[11px] h-[11px] text-[#2f86d6]" />
                <Sun className="w-[11px] h-[11px] text-[#e08a1e]" />
                <Sun className="w-[11px] h-[11px] text-[#cc4433]" />
                <RefreshCcw className="w-[11px] h-[11px] text-[#666]" />
                <Lightbulb className="w-[11px] h-[11px] text-[#aa4433]" />
                <Eye className="w-[11px] h-[11px] text-[#5577aa]" />
                <Lock className="w-[11px] h-[11px] text-[#555]" />
                <RefreshCcw className="w-[11px] h-[11px] text-[#777]" />
                <MapPin className="w-[9px] h-[9px] text-[#5a94c8]" />
                <Box className="w-[11px] h-[11px] text-[#444]" />
                <Home className="w-[11px] h-[11px] text-[#884444]" />
                <Home className="w-[11px] h-[11px] text-[#666]" />
                <Frame className="w-[11px] h-[11px] text-[#555]" />
              </div>
              <span className="ml-[6px] text-[6px]">◂</span>
              <div className="ml-[351px] w-[10px] h-[9px] border border-[#aaa] bg-[#e4e4e4]" />
              <span className="ml-auto mr-[2px] text-[6px]">▸</span>
            </div>
          </div>

          {/* project browser */}
          <div className="w-[149px] shrink-0 flex flex-col">
            <div className="h-[13px] bg-[#c6d4e1] flex items-center justify-between px-[2px] text-[#555]">
              <span className="whitespace-nowrap">项目浏览器 - 海创地下室负一层</span>
              <X className="w-[9px] h-[9px] text-[#111]" strokeWidth={3} />
            </div>
            <div className="h-[553px] bg-white flex overflow-hidden">
              <div className="flex-1 pt-[1.6px]">
                {TREE.map((row, i) => (
                  <TreeRow key={`${row.t}-${i}`} row={row} />
                ))}
              </div>
              <div className="w-[11px] bg-[#eeeeee] flex flex-col items-center text-[6px] text-[#444]">
                <span className="h-[13px] flex items-center">▴</span>
                <div className="w-[10px] h-[227px] border border-[#bbb] rounded-[2px] bg-gradient-to-r from-[#e4e4e4] to-[#c8c8c8] flex items-center justify-center">≡</div>
                <span className="mt-auto h-[10px] flex items-center">▾</span>
              </div>
            </div>
            <div className="h-[10px] bg-[#ededed] flex items-center text-[6px] text-[#444] pl-[3px]">
              <span>◂</span>
              <div className="ml-[5px] w-[96px] h-[9px] border border-[#bbb] rounded-[2px] bg-gradient-to-b from-[#e4e4e4] to-[#c8c8c8] flex items-center justify-center">≡</div>
              <span className="ml-auto mr-[14px]">▸</span>
            </div>
          </div>
        </div>

        {/* status bar */}
        <div className="h-[18px] shrink-0 bg-gradient-to-b from-[#e6e6e6] to-[#b4b4b4] flex items-center pl-[1px] text-[#333] whitespace-nowrap rounded-b-[3px]">
          <span className="w-[697px] shrink-0">单击可进行选择; 按 Tab 键并单击可选择其他项目; 按 Ctrl 键并单击可将新项目添加到选择集; 按 Shift 键并单击可取消选择。</span>
          <Link2 className="w-[12px] h-[12px] text-[#3a8a4a]" />
          <div className="ml-[7px] w-[145px] h-[14px] bg-white flex items-center justify-end pr-[3px] text-[6px] text-[#888]">▾</div>
          <Hourglass className="ml-[9px] w-[10px] h-[10px] text-[#888]" />
          <span className="ml-[1px]">:0</span>
          <LayoutList className="ml-[17px] w-[12px] h-[12px] text-[#444]" />
          <LayoutList className="ml-[6px] w-[12px] h-[12px] text-[#999]" />
          <div className="ml-[3px] w-[111px] h-[14px] bg-white flex items-center justify-between px-[2px] text-[#888]">
            <span>主模型</span>
            <span className="text-[6px]">▾</span>
          </div>
          <div className="ml-[116px] flex items-center gap-[8px]">
            <MousePointer2 className="w-[12px] h-[12px] text-[#d6a21f]" />
            <MousePointer2 className="w-[12px] h-[12px] text-[#cc3a2a]" />
            <Frame className="w-[12px] h-[12px] text-[#d07a3a]" />
            <Frame className="w-[12px] h-[12px] text-[#cc3a2a]" />
            <MousePointer2 className="w-[12px] h-[12px] text-[#444]" />
            <Filter className="w-[12px] h-[12px] text-[#555]" />
            <span className="-ml-[8px]">:0</span>
          </div>
        </div>
      </div>
    </div>
  );
}
